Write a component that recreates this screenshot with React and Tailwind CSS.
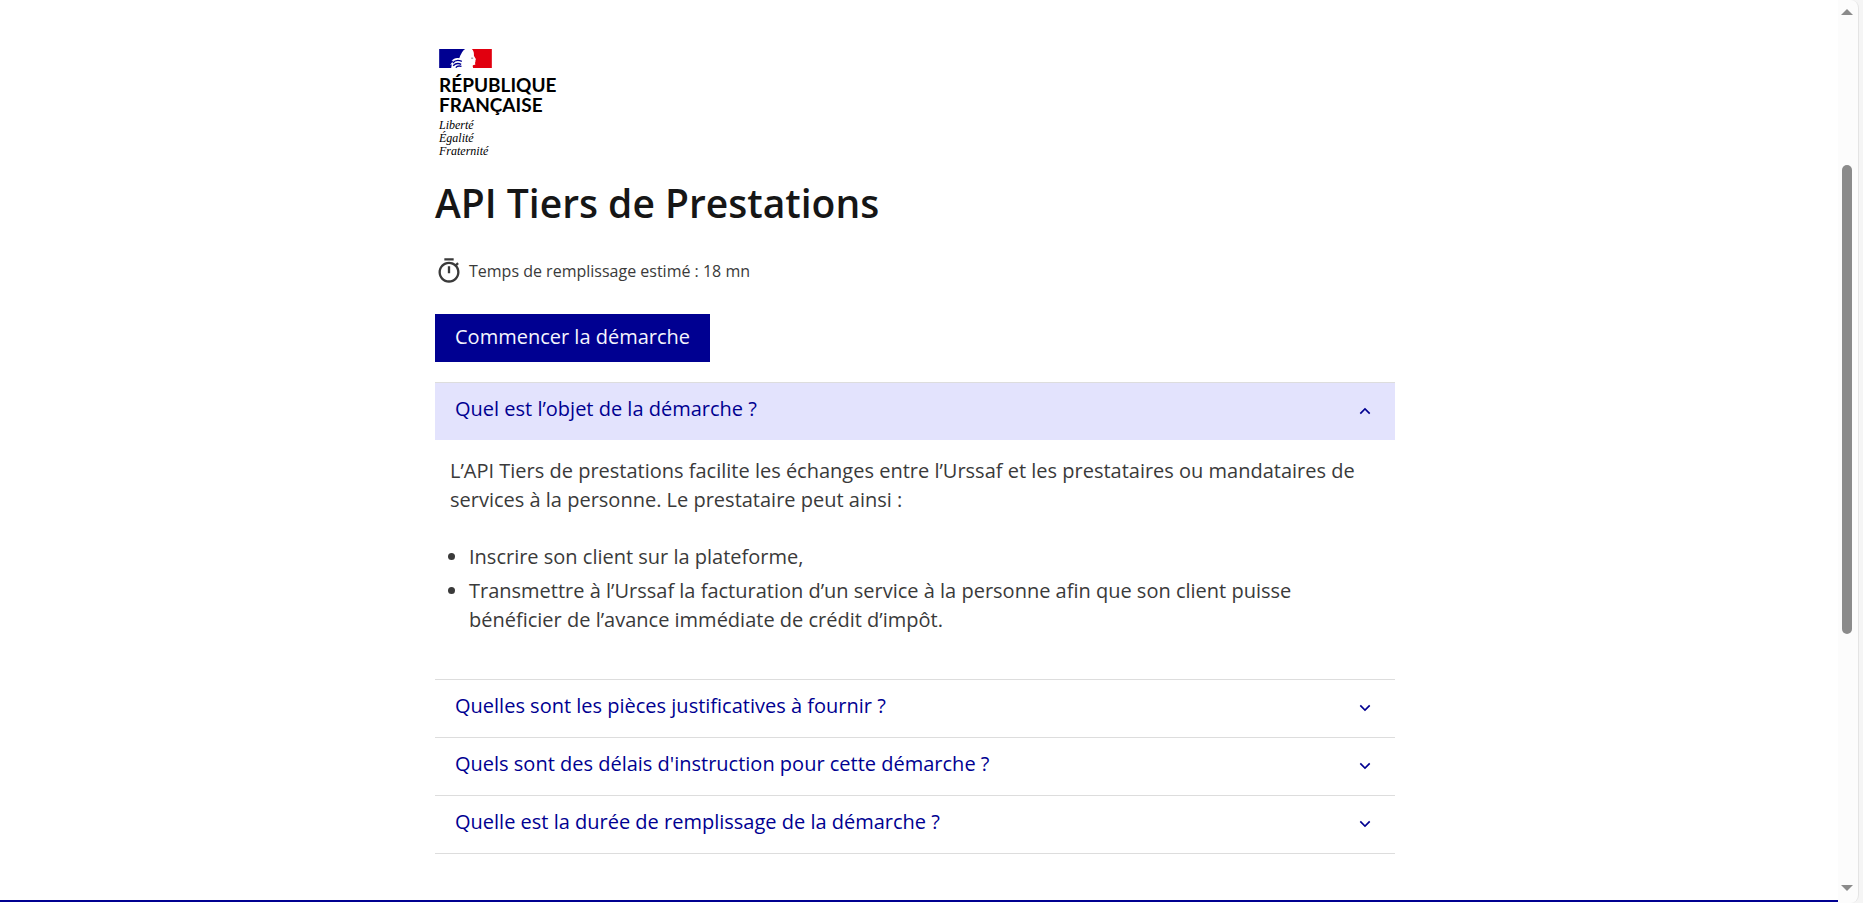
import { useState } from "react";
import { RiTimerLine, RiArrowDownSLine, RiArrowUpSLine } from "react-icons/ri";

const QUESTIONS = [
  { id: "objet", title: "Quel est l’objet de la démarche ?" },
  { id: "pieces", title: "Quelles sont les pièces justificatives à fournir ?" },
  { id: "delais", title: "Quels sont des délais d'instruction pour cette démarche ?" },
  { id: "duree", title: "Quelle est la durée de remplissage de la démarche ?" },
];

const Flag = () => (
  <svg viewBox="0 0 158 57" className="h-[19px] w-[53px]" aria-hidden="true">
    <path fill="#000091" d="M0 0H78C72 4 69 9 66 15C62 20 63 24 60 28C52 25 43 29 37 36L43 35C39 39 36 43 33 48L38 46L36 57H0Z" />
    <path fill="none" stroke="#000091" strokeWidth="4" d="M41 42C47 34 56 32 68 37M42 50C50 42 58 42 66 46M50 56C54 50 60 50 67 52" />
    <path fill="#e1000f" d="M98 0H158V57H102C101 52 99 50 103 48C110 48 109 45 107 42C110 39 108 37 109 34C112 31 108 27 105 22C103 17 107 9 98 0Z" />
    <path fill="#7c7c8c" d="M96 26h6v3h-6z" />
  </svg>
);

const Logo = () => (
  <a href="#accueil" className="ml-1 flex w-fit flex-col text-black">
    <Flag />
    <span className="mt-[7px] font-[Lato,sans-serif] text-[19px] leading-5 font-bold">
      RÉPUBLIQUE
      <br />
      FRANÇAISE
    </span>
    <span className="mt-1 font-['Liberation_Serif',serif] text-[12px] leading-[13px] italic">
      Liberté
      <br />
      Égalité
      <br />
      Fraternité
    </span>
  </a>
);

const Purpose = () => (
  <div className="px-[15px] pt-4 pb-[45px] leading-[29px]">
    <p>
      L’API Tiers de prestations facilite les échanges entre l’Urssaf et les prestataires ou mandataires de
      services à la personne. Le prestataire peut ainsi :
    </p>
    <ul className="mt-7 list-disc space-y-[5px] pl-[19px]">
      <li>Inscrire son client sur la plateforme,</li>
      <li className="max-w-[840px]">
        Transmettre à l’Urssaf la facturation d’un service à la personne afin que son client puisse
        bénéficier de l’avance immédiate de crédit d’impôt.
      </li>
    </ul>
  </div>
);

const Question = ({ id, title, open, onToggle }) => {
  const Arrow = open ? RiArrowUpSLine : RiArrowDownSLine;
  return (
    <section className="border-t border-[#dddddd]">
      <h2>
        <button
          type="button"
          aria-expanded={open}
          aria-controls={id}
          onClick={onToggle}
          className={`flex w-full items-center justify-between px-5 pt-[11px] pb-4 text-left leading-[30px] font-medium text-[#000091] ${open ? "bg-[#e3e3fd]" : ""}`}
        >
          {title}
          <Arrow size={20} className="mt-1 shrink-0" />
        </button>
      </h2>
      <div id={id} hidden={!open}>
        {id === "objet" && <Purpose />}
      </div>
    </section>
  );
};

const Scrollbar = () => (
  <div className="w-[25px] shrink-0 bg-[#f5f5f5]" aria-hidden="true">
    <div className="flex h-screen w-[21px] flex-col items-center rounded-r-lg border-r border-[#e4e4e4] bg-[#fcfcfc] py-[9px] pr-[2px]">
      <svg viewBox="0 0 12 6" className="h-[6px] w-3" fill="#8b8b8b"><path d="M6 0L12 6H0Z" /></svg>
      <div className="flex w-full flex-1 flex-col items-center pt-[150px] pb-[251px]">
        <div className="w-[10px] flex-1 rounded-full bg-[#8b8b8b]" />
      </div>
      <svg viewBox="0 0 12 6" className="mb-[3px] h-[6px] w-3" fill="#8b8b8b"><path d="M0 0H12L6 6Z" /></svg>
    </div>
  </div>
);

export default function App() {
  const [openId, setOpenId] = useState("objet");

  return (
    <div className="flex h-screen overflow-hidden bg-white font-['Open_Sans',sans-serif] text-[20px] text-[#3a3a3a]">
      <div className="flex-1 overflow-hidden">
        <main className="pt-[49px] pr-2 pb-[46px]">
          <div className="mx-auto max-w-[960px]">
            <Logo />

            <h1 className="mt-[21px] text-[39px] leading-[48px] font-semibold text-[#161616]">
              API Tiers de Prestations
            </h1>

            <p className="mt-[30px] flex items-center gap-[6px] text-[16px] leading-7">
              <RiTimerLine size={28} />
              Temps de remplissage estimé : 18 mn
            </p>

            <button
              type="button"
              className="mt-[29px] bg-[#000091] px-5 pt-2 pb-[10px] leading-[30px] font-medium text-[#f5f5fe]"
            >
              Commencer la démarche
            </button>

            <div className="mt-5 border-b border-[#dddddd]">
              {QUESTIONS.map((q) => (
                <Question
                  key={q.id}
                  id={q.id}
                  title={q.title}
                  open={openId === q.id}
                  onToggle={() => setOpenId(openId === q.id ? null : q.id)}
                />
              ))}
            </div>
          </div>
        </main>
        <footer className="border-t-2 border-[#000091] py-8" />
      </div>
      <Scrollbar />
    </div>
  );
}
